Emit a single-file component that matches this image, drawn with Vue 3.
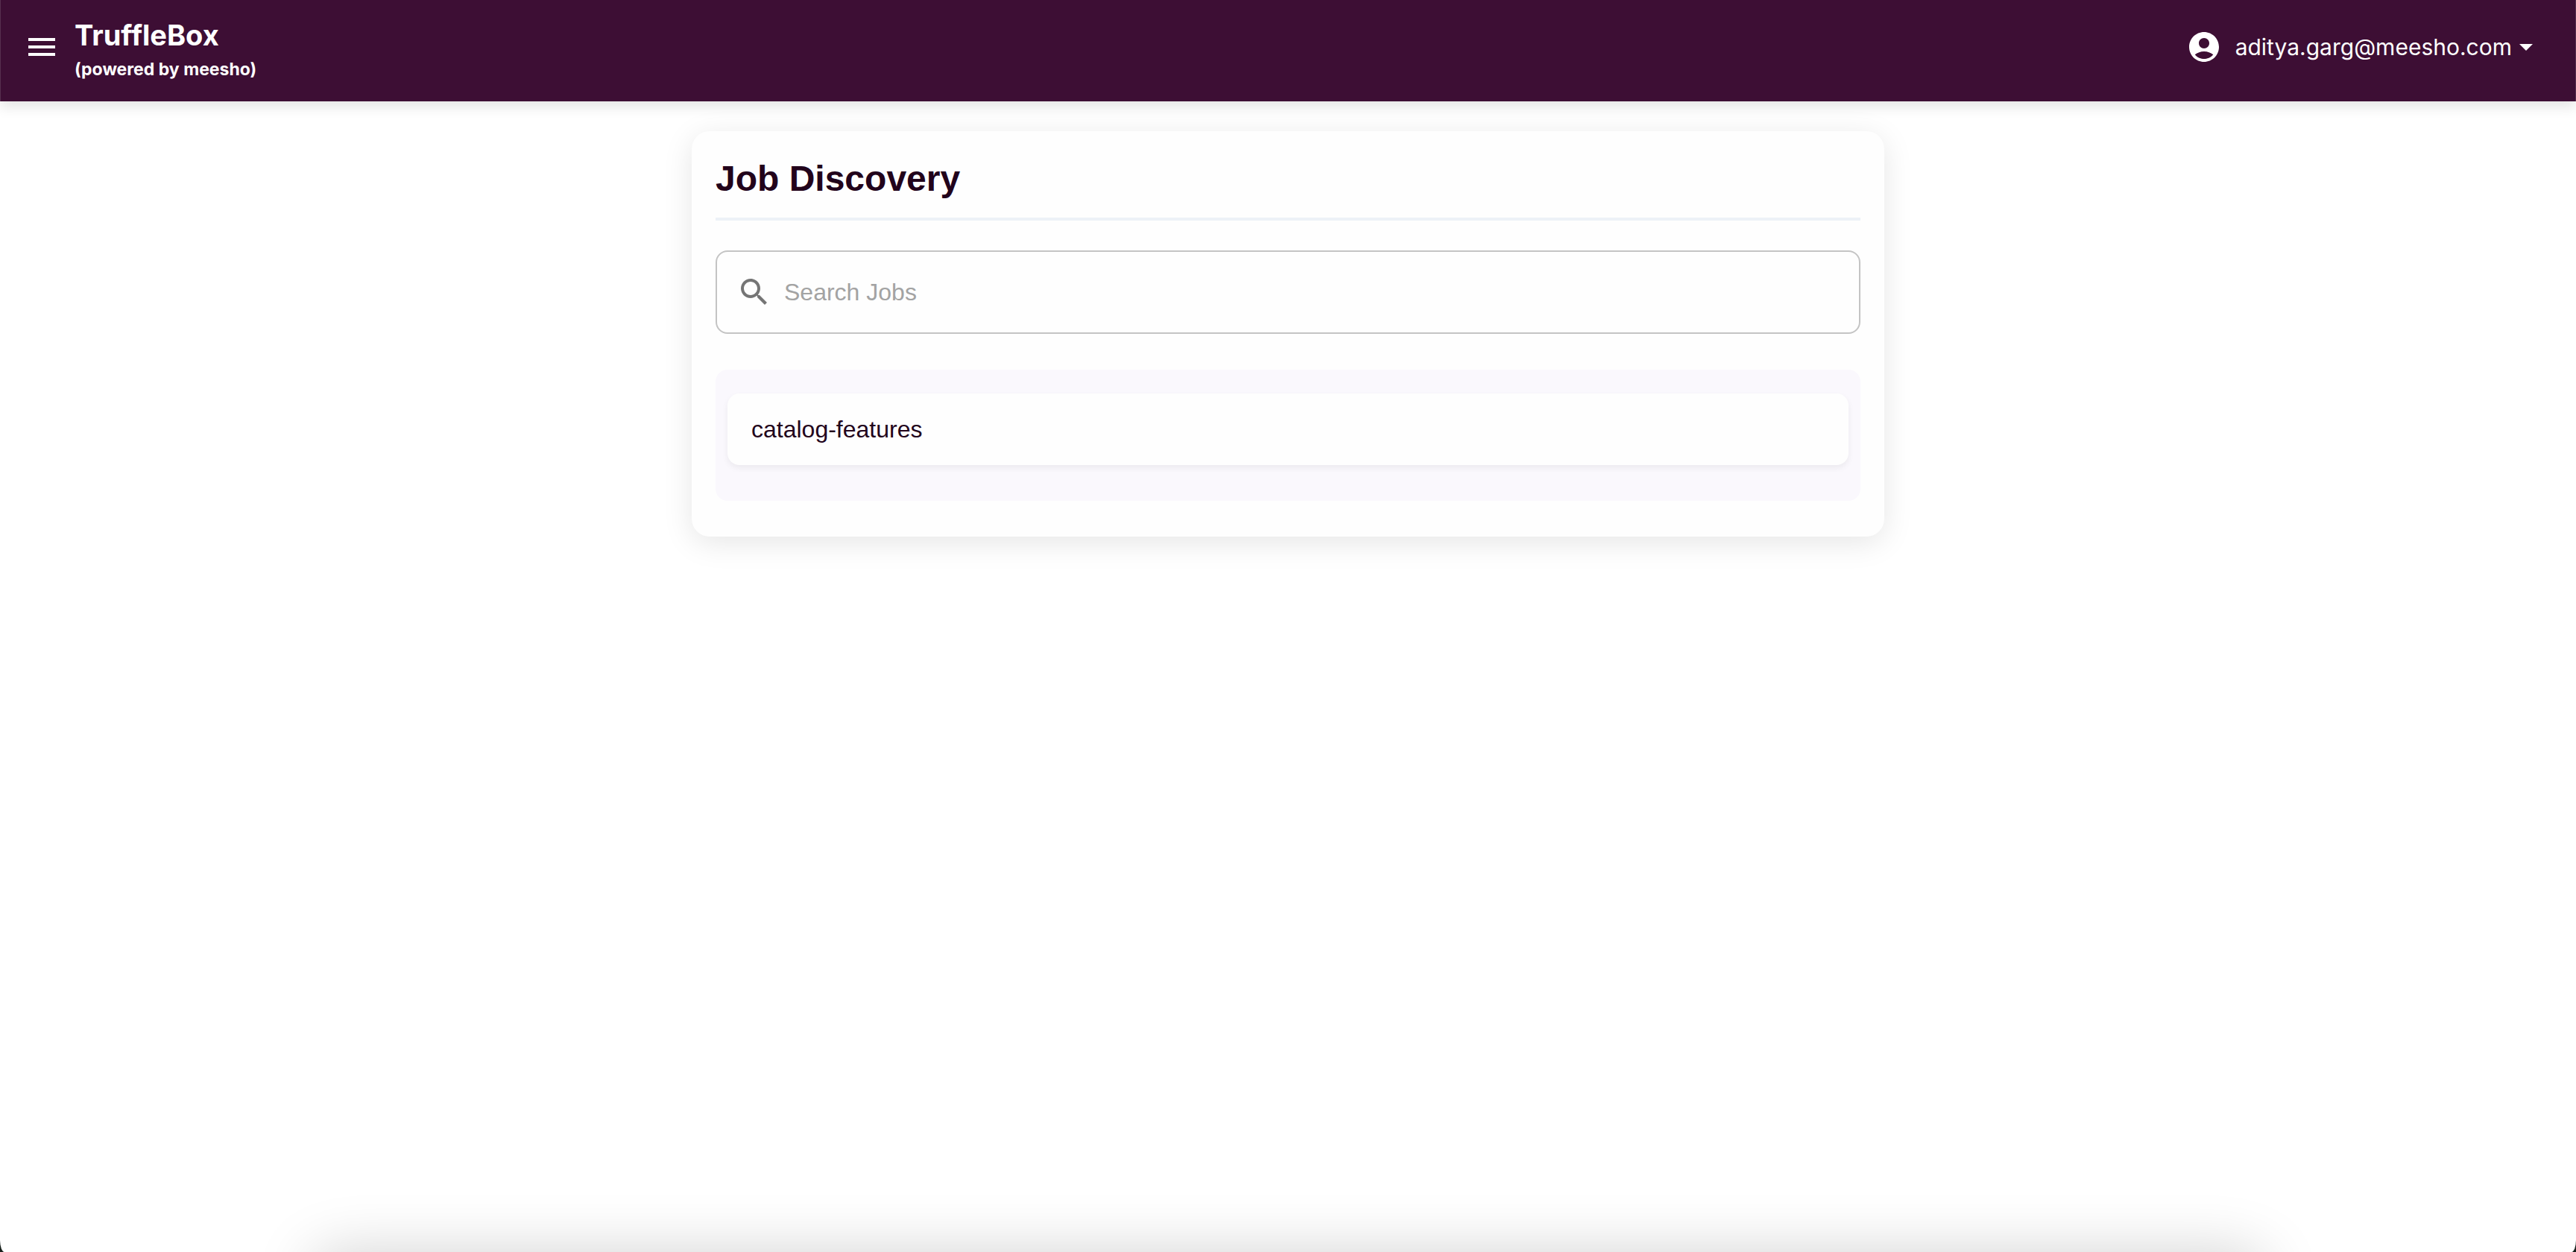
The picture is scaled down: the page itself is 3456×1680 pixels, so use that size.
<script setup>
import { ref, computed } from 'vue'

const query = ref('')
const jobs = ['catalog-features']
const visibleJobs = computed(() =>
  jobs.filter((job) => job.toLowerCase().includes(query.value.toLowerCase()))
)
</script>

<template>
  <div class="page">
    <header class="bar">
      <button class="menu" type="button" aria-label="Open menu">
        <svg viewBox="0 0 24 24" aria-hidden="true"><path d="M3 18h18v-2H3zm0-5h18v-2H3zm0-7v2h18V6z" /></svg>
      </button>
      <div class="brand">
        <span class="name">TruffleBox</span>
        <span class="tagline">(powered by meesho)</span>
      </div>
      <button class="account" type="button" aria-haspopup="menu">
        <svg viewBox="0 0 24 24" aria-hidden="true">
          <path d="M12 2C6.48 2 2 6.48 2 12s4.480 10 10 10 10-4.480 10-10S17.520 2 12 2m0 4c1.930 0 3.500 1.570 3.500 3.500S13.930 13 12 13s-3.500-1.570-3.500-3.500S10.070 6 12 6m0 14c-2.030 0-4.430-.82-6.140-2.880C7.550 15.800 9.680 15 12 15s4.450.8 6.140 2.120C16.430 19.180 14.030 20 12 20" />
        </svg>
        <span>aditya.garg@meesho.com</span>
        <i class="caret" aria-hidden="true"></i>
      </button>
    </header>

    <main class="content">
      <section class="card">
        <h1>Job Discovery</h1>
        <label class="search">
          <svg viewBox="0 0 24 24" aria-hidden="true">
            <path d="M15.500 14h-.79l-.28-.27C15.410 12.590 16 11.110 16 9.500 16 5.910 13.090 3 9.500 3S3 5.910 3 9.500 5.910 16 9.500 16c1.610 0 3.090-.59 4.230-1.570l.27.28v.79l5 4.990L20.490 19zm-6 0C7.010 14 5 11.990 5 9.500S7.010 5 9.500 5 14 7.010 14 9.500 11.990 14 9.500 14" />
          </svg>
          <input v-model="query" type="text" placeholder="Search Jobs" aria-label="Search Jobs" />
        </label>
        <ul class="jobs">
          <li v-for="job in visibleJobs" :key="job"><a href="#">{{ job }}</a></li>
        </ul>
      </section>
    </main>
    <div class="dock-shadow" aria-hidden="true"></div>
  </div>
</template>

<style>
html {
  background: #18201c;
}
</style>

<style scoped>
* {
  box-sizing: border-box;
}
.page {
  position: relative;
  display: flex;
  flex-direction: column;
  min-height: 100vh;
  overflow: hidden;
  background: #fff;
  border-radius: 0 0 6px 6px / 0 0 16px 16px;
  font-family: "Liberation Sans", Arial, sans-serif;
  font-size: 32px;
  color: #22031b;
}
svg {
  display: block;
  flex: none;
  width: 48px;
  height: 48px;
  fill: currentColor;
}
button {
  padding: 0;
  border: 0;
  background: none;
  color: inherit;
  font: inherit;
  cursor: pointer;
}
.bar {
  display: flex;
  align-items: flex-start;
  padding: 20px 57px 24px 31px;
  border: solid #57304f;
  border-width: 0 1px;
  background: #3d0e34;
  color: #fff;
  font-family: Inter, sans-serif;
  box-shadow: 0 8px 16px rgba(0, 0, 0, 0.1);
}
.menu {
  margin-top: 19px;
}
.brand {
  display: flex;
  flex-direction: column;
  margin-left: 20px;
  font-weight: 700;
}
.name {
  font-size: 38px;
  line-height: 54px;
}
.tagline {
  font-size: 23px;
  line-height: 38px;
}
.account {
  display: flex;
  align-items: center;
  margin: 19px 0 0 auto;
  font-size: 30px;
}
.account span {
  margin-left: 18px;
}
.caret {
  margin: 0 0 0 10px;
  border: solid transparent;
  border-width: 9px 9px 0;
  border-top-color: #fff;
}
.content {
  padding: 40px 32px;
}
.card {
  max-width: 1600px;
  margin: 0 auto;
  padding: 32px 32px 48px;
  border-radius: 24px;
  background: #fefefe;
  box-shadow: 0 8px 40px rgba(0, 0, 0, 0.1);
}
h1 {
  margin: 0 0 40px;
  padding: 2px 0 22px;
  border-bottom: 4px solid #edf2f7;
  font-size: 48px;
  line-height: 60px;
}
.search {
  display: flex;
  align-items: center;
  height: 112px;
  padding: 0 26px;
  border: 2px solid #c4c4c4;
  border-radius: 16px;
  color: #757575;
}
.search input {
  flex: 1;
  min-width: 0;
  margin-left: 16px;
  padding: 0;
  border: 0;
  outline: 0;
  background: none;
  color: #22031b;
  font: inherit;
}
.search input::placeholder {
  color: #a3a3a3;
  opacity: 1;
}
.jobs {
  margin: 48px 0 0;
  padding: 32px 16px 48px;
  border-radius: 16px;
  background: #faf8fd;
  list-style: none;
}
.jobs a {
  display: block;
  padding: 24px 32px;
  border-radius: 16px;
  background: #fefefe;
  color: inherit;
  line-height: 48px;
  text-decoration: none;
  box-shadow: 0 4px 8px rgba(0, 0, 0, 0.06);
}
.dock-shadow {
  position: absolute;
  top: 100%;
  left: 12%;
  right: 12%;
  height: 80px;
  border-radius: 40px;
  box-shadow: 0 0 80px rgba(0, 0, 0, 0.18);
}
</style>
